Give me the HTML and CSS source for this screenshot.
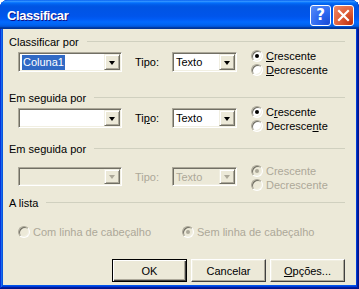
FILE: index.html
```html
<!DOCTYPE html>
<html>
<head>
    <meta charset="UTF-8">
    <title>Classificar</title>
    <link rel="stylesheet" href="styles.css">
</head>
<body>
    <div class="window">
        <div class="titlebar">
            <span class="title">Classificar</span>
            <div class="title-buttons">
                <span class="tbtn help">?</span>
                <span class="tbtn close">
                    <svg width="13" height="13" viewBox="0 0 13 13">
                        <path d="M2 2 L11 11 M11 2 L2 11" stroke="#fff" stroke-width="2.2" stroke-linecap="square"/>
                    </svg>
                </span>
            </div>
        </div>

        <div class="content">
            <div class="group first">
                <div class="legend"><span>Classificar por</span></div>
                <div class="row">
                    <div class="combo wide"><span class="value"><span class="sel">Coluna1</span></span><span class="drop"></span></div>
                    <span class="tipo">Tipo:</span>
                    <div class="combo narrow"><span class="value">Texto</span><span class="drop"></span></div>
                    <div class="radios">
                        <div class="radio"><span class="circle checked"></span><span><u>C</u>rescente</span></div>
                        <div class="radio"><span class="circle"></span><span><u>D</u>ecrescente</span></div>
                    </div>
                </div>
            </div>

            <div class="group second">
                <div class="legend"><span>Em seguida por</span></div>
                <div class="row">
                    <div class="combo wide"><span class="value"></span><span class="drop"></span></div>
                    <span class="tipo">Ti<u>p</u>o:</span>
                    <div class="combo narrow"><span class="value">Texto</span><span class="drop"></span></div>
                    <div class="radios">
                        <div class="radio"><span class="circle checked"></span><span>C<u>r</u>escente</span></div>
                        <div class="radio"><span class="circle"></span><span>Decresce<u>n</u>te</span></div>
                    </div>
                </div>
            </div>

            <div class="group third disabled">
                <div class="legend"><span>Em seguida por</span></div>
                <div class="row">
                    <div class="combo wide"><span class="value"></span><span class="drop"></span></div>
                    <span class="tipo">Tipo:</span>
                    <div class="combo narrow"><span class="value">Texto</span><span class="drop"></span></div>
                    <div class="radios">
                        <div class="radio"><span class="circle checked"></span><span>Crescente</span></div>
                        <div class="radio"><span class="circle"></span><span>Decrescente</span></div>
                    </div>
                </div>
            </div>

            <div class="group list disabled">
                <div class="legend"><span>A lista</span></div>
                <div class="list-row">
                    <div class="radio com"><span class="circle"></span><span>Com linha de cabeçalho</span></div>
                    <div class="radio"><span class="circle checked"></span><span>Sem linha de cabeçalho</span></div>
                </div>
            </div>

            <div class="buttons">
                <span class="btn default">OK</span>
                <span class="btn">Cancelar</span>
                <span class="btn"><u>O</u>pções...</span>
            </div>
        </div>
    </div>
</body>
</html>
```

FILE: styles.css
```css
body {
    margin: 0;
    background: #fff;
    font-family: "Liberation Sans", Arial, sans-serif;
    font-size: 11px;
    color: #000;
}
.window {
    width: 359px;
    height: 289px;
    display: flex;
    flex-direction: column;
    box-sizing: border-box;
    padding: 0 3px 4px 3px;
    background: #0055ea;
    border-radius: 8px 8px 0 0;
    box-shadow: inset -1px -1px #00138c, inset 1px 1px #0831d9,
                inset -2px -2px #001ea0, inset 2px 2px #166aee,
                inset -3px -3px #003bda, inset 3px 3px #0855dd;
}
.titlebar {
    height: 29px;
    margin: 0 -3px;
    display: flex;
    align-items: center;
    justify-content: space-between;
    padding: 0 5px 0 7px;
    border-radius: 8px 8px 0 0;
    background: linear-gradient(to bottom, #0058ee 0%, #3593ff 4%, #288eff 6%, #127dff 8%,
        #036ffc 10%, #0262ee 14%, #0057e5 20%, #0054e3 24%, #0055eb 56%, #005bf5 66%,
        #026afe 76%, #0062ef 86%, #0052d6 92%, #0040ab 94%, #003092 100%);
}
.title {
    color: #fff;
    font-weight: bold;
    font-size: 13px;
    letter-spacing: -0.4px;
    text-shadow: 1px 1px #0f1089;
    margin-top: 1px;
}
.title-buttons {
    display: flex;
    gap: 2px;
    margin-top: 1px;
}
.tbtn {
    width: 21px;
    height: 21px;
    box-sizing: border-box;
    border: 1px solid #fff;
    border-radius: 3px;
    display: flex;
    align-items: center;
    justify-content: center;
}
.tbtn.help {
    background: radial-gradient(circle at 90% 90%, #1c4ed8 0%, #2c67f0 45%, #5a8ef8 100%);
    color: #fff;
    font-family: "DejaVu Sans", sans-serif;
    font-weight: bold;
    font-size: 15px;
}
.tbtn.close {
    background: radial-gradient(circle at 90% 90%, #c1320f 0%, #dd5a34 45%, #ef8a6a 100%);
}
.content {
    flex: 1;
    background: #ece9d8;
    padding: 6px 11px 0 6px;
    display: flex;
    flex-direction: column;
}
.legend {
    display: flex;
    align-items: center;
    height: 13px;
}
.legend::after {
    content: "";
    flex: 1;
    margin-left: 8px;
    border-top: 1px solid #d0d0bf;
}
.group.second { margin-top: 14px; }
.group.third { margin-top: 9px; }
.group.list { margin-top: 4px; }
.row {
    display: flex;
    align-items: flex-start;
    padding-left: 9px;
    margin-top: 4px;
}
.third .row { margin-top: 12px; }
.combo {
    height: 20px;
    box-sizing: border-box;
    display: flex;
    align-items: center;
    background: #fff;
    border: 1px solid;
    border-color: #aca899 #fff #fff #aca899;
    box-shadow: inset 1px 1px #716f64, inset -1px -1px #f1efe2;
    padding: 1px 1px 1px 2px;
}
.combo.wide { width: 104px; }
.combo.narrow { width: 65px; }
.third .combo { height: 19px; }
.combo .value {
    flex: 1;
    padding-left: 1px;
    white-space: nowrap;
}
.sel {
    background: #316ac5;
    color: #fff;
    padding: 1px 1px 2px 1px;
}
.drop {
    width: 16px;
    height: 16px;
    box-sizing: border-box;
    background: #ece9d8;
    border: 1px solid;
    border-color: #f1efe2 #716f64 #716f64 #f1efe2;
    box-shadow: inset 1px 1px #fff, inset -1px -1px #aca899;
    display: flex;
    align-items: center;
    justify-content: center;
}
.third .drop { height: 15px; }
.drop::after {
    content: "";
    border-style: solid;
    border-width: 4px 3.5px 0 3.5px;
    border-color: #000 transparent transparent transparent;
    margin-top: 1px;
}
.tipo {
    width: 37px;
    margin-left: 13px;
    line-height: 20px;
}
.radios {
    margin-left: 14px;
    margin-top: -3px;
}
.radio {
    display: flex;
    align-items: center;
    height: 14px;
}
.circle {
    width: 12px;
    height: 12px;
    box-sizing: border-box;
    border-radius: 50%;
    border: 1px solid;
    border-color: #aca899 #fff #fff #aca899;
    box-shadow: inset 1px 1px #716f64, inset -1px -1px #f1efe2;
    background: #fff;
    margin-right: 3px;
    display: flex;
    align-items: center;
    justify-content: center;
}
.circle.checked::after {
    content: "";
    width: 4px;
    height: 4px;
    border-radius: 50%;
    background: #000;
}
.disabled .row,
.disabled .list-row {
    color: #aca899;
}
.disabled .combo,
.disabled .circle {
    background: #ece9d8;
}
.disabled .drop::after {
    border-top-color: #aca899;
}
.disabled .circle.checked::after {
    background: #aca899;
}
.list-row {
    display: flex;
    margin-top: 16px;
    padding-left: 9px;
}
.radio.com {
    width: 164px;
}
.buttons {
    display: flex;
    justify-content: flex-end;
    gap: 4px;
    margin-top: 20px;
}
.btn {
    width: 75px;
    height: 23px;
    box-sizing: border-box;
    display: flex;
    align-items: center;
    justify-content: center;
    background: #ece9d8;
    border: 1px solid;
    border-color: #fff #404040 #404040 #fff;
    box-shadow: inset -1px -1px #aca899, inset 1px 1px #f1efe2;
}
.btn.default {
    border-color: #000;
    box-shadow: inset 1px 1px #fff, inset -1px -1px #404040, inset -2px -2px #aca899;
}
```
